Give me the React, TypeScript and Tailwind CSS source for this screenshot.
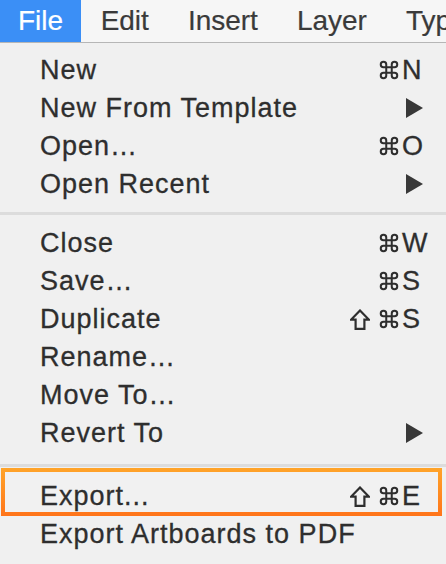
import React from "react";

type Item = {
  label: string;
  mods?: ("shift" | "cmd")[];
  keyChar?: string;
  submenu?: boolean;
  highlight?: boolean;
};

const groups: Item[][] = [
  [
    { label: "New", mods: ["cmd"], keyChar: "N" },
    { label: "New From Template", submenu: true },
    { label: "Open…", mods: ["cmd"], keyChar: "O" },
    { label: "Open Recent", submenu: true },
  ],
  [
    { label: "Close", mods: ["cmd"], keyChar: "W" },
    { label: "Save…", mods: ["cmd"], keyChar: "S" },
    { label: "Duplicate", mods: ["shift", "cmd"], keyChar: "S" },
    { label: "Rename…" },
    { label: "Move To…" },
    { label: "Revert To", submenu: true },
  ],
  [
    { label: "Export...", mods: ["shift", "cmd"], keyChar: "E", highlight: true },
    { label: "Export Artboards to PDF" },
  ],
];

function CmdIcon() {
  return (
    <svg width="22" height="22" viewBox="0 0 24 24" fill="none" aria-hidden="true">
      <path
        d="M15 6v12a3 3 0 1 0 3-3H6a3 3 0 1 0 3 3V6a3 3 0 1 0-3 3h12a3 3 0 1 0-3-3"
        stroke="#2e2e2e"
        strokeWidth="2.2"
        strokeLinecap="round"
        strokeLinejoin="round"
      />
    </svg>
  );
}

function ShiftIcon() {
  return (
    <svg width="20" height="21" viewBox="0 0 20 21" fill="none" aria-hidden="true">
      <path
        d="M10 1.5 L18.8 10.6 H14.4 V19.8 H5.6 V10.6 H1.2 Z"
        stroke="#2e2e2e"
        strokeWidth="2.2"
        strokeLinejoin="miter"
      />
    </svg>
  );
}

function SubmenuArrow() {
  return (
    <svg width="17" height="20" viewBox="0 0 17 20" aria-hidden="true">
      <polygon points="0,0 17,10 0,20" fill="#383838" />
    </svg>
  );
}

function MenuRow({ item }: { item: Item }) {
  return (
    <div className="relative flex h-[38px] items-center pl-[40px]">
      {item.highlight && (
        <div className="absolute -top-[9px] -bottom-[1px] left-[1px] right-[4px] bg-gradient-to-b from-[#ffa42a] to-[#ff741a] p-[4px]">
          <div className="h-full w-full bg-[#f1f1f1]" />
        </div>
      )}
      <span className="relative flex-1 whitespace-nowrap">{item.label}</span>
      <div className="relative flex w-[106px] items-center">
        <div className="flex w-[62px] items-center justify-end gap-[8px] pr-[2px]">
          {item.mods?.map((m, i) => (m === "cmd" ? <CmdIcon key={i} /> : <ShiftIcon key={i} />))}
        </div>
        {item.keyChar && <span>{item.keyChar}</span>}
        {item.submenu && (
          <span className="ml-[4px] flex items-center">
            <SubmenuArrow />
          </span>
        )}
      </div>
    </div>
  );
}

export default function App() {
  const bar = ["File", "Edit", "Insert", "Layer", "Typ"];
  return (
    <div
      className="h-[564px] w-[446px] overflow-hidden bg-[#f0f0f0] text-[#2e2e2e]"
      style={{ fontFamily: "'Liberation Sans', Arial, sans-serif" }}
    >
      {/* Menu bar */}
      <div className="flex h-[43px] border-b border-[#b6b6b6] bg-[#f6f6f6] text-[28px] leading-[42px] text-[#3a3a3a] [-webkit-text-stroke:0.2px_#3a3a3a]">
        {bar.map((name, i) => (
          <div
            key={name}
            className={
              i === 0
                ? "bg-[#3b8ff6] px-[18px] whitespace-nowrap text-white [-webkit-text-stroke:0.2px_#ffffff]"
                : "px-[19.5px] whitespace-nowrap"
            }
          >
            {name}
          </div>
        ))}
      </div>

      {/* File menu */}
      <div className="pt-[8px] text-[27px] leading-[38px] tracking-[1px] [-webkit-text-stroke:0.3px_#2e2e2e]">
        {groups[0].map((it) => (
          <MenuRow key={it.label} item={it} />
        ))}
        <div className="mb-[9px] mt-[9px] h-[3px] bg-[#dcdcdc]" />
        {groups[1].map((it) => (
          <MenuRow key={it.label} item={it} />
        ))}
        <div className="mb-[10px] mt-[12px] h-[3px] bg-[#dcdcdc]" />
        {groups[2].map((it) => (
          <MenuRow key={it.label} item={it} />
        ))}
      </div>
    </div>
  );
}
